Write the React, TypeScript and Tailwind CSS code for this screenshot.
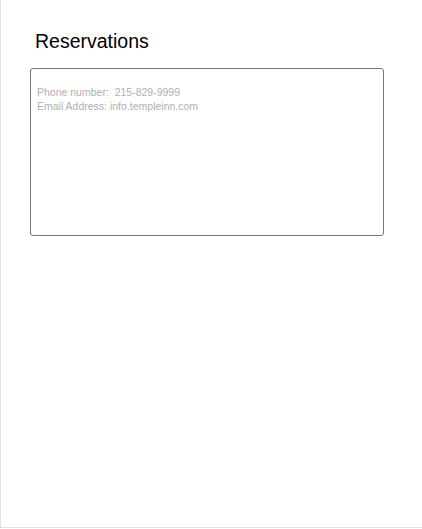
const App = () => {
  return (
    <div
      className="h-[528px] w-[422px] border-l border-b border-[#e3e3e3] bg-white"
      style={{ fontFamily: '"Liberation Sans", Arial, sans-serif' }}
    >
      <div className="pl-[34px] pt-[29px]">
        <h1 className="text-[19.5px] leading-[24px] font-normal text-black">Reservations</h1>
      </div>
      <div className="pl-[29px] pt-[15px]">
        <textarea
          className="block w-[354px] h-[168px] resize-none rounded-[3px] border border-[#767676] px-[6px] pt-[16px] text-[10.5px] leading-[14px] text-black placeholder:text-[#b0b0b0] outline-none"
          placeholder={'Phone number:  215-829-9999\nEmail Address: info.templeinn.com'}
        />
      </div>
    </div>
  );
};

export default App;
